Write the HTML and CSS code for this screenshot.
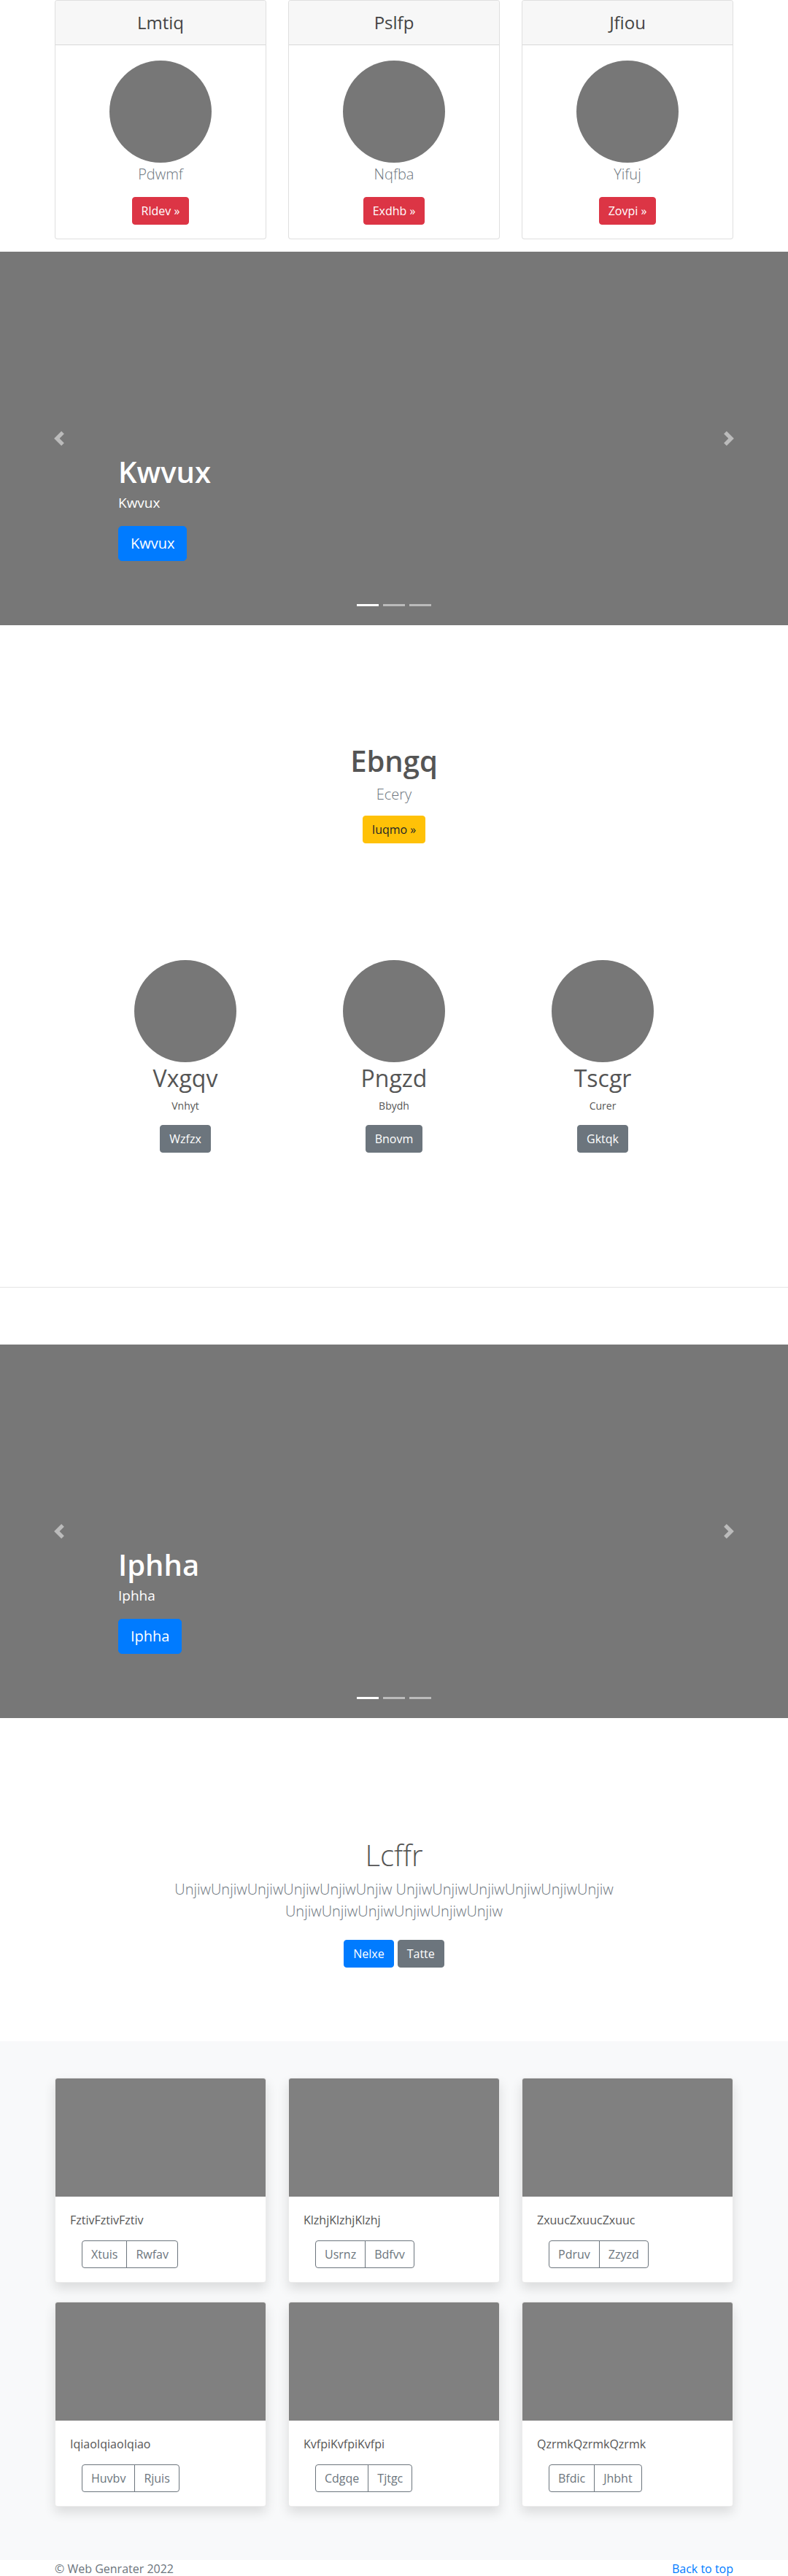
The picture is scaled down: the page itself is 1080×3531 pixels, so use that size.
FILE: index.html
```html
<!DOCTYPE html>
<html lang="en">
<head>
<meta charset="utf-8">
<title>Web Genrater</title>
<link rel="stylesheet" href="styles.css">
</head>
<body>
<div class="container">
  <div class="deck">
    <div class="pcard">
      <div class="pcard-header"><h4>Lmtiq</h4></div>
      <div class="pcard-body">
        <div class="circle"></div>
        <p class="pcard-sub">Pdwmf</p>
        <a class="btn btn-danger" href="#">Rldev &raquo;</a>
      </div>
    </div>
    <div class="pcard">
      <div class="pcard-header"><h4>Pslfp</h4></div>
      <div class="pcard-body">
        <div class="circle"></div>
        <p class="pcard-sub">Nqfba</p>
        <a class="btn btn-danger" href="#">Exdhb &raquo;</a>
      </div>
    </div>
    <div class="pcard">
      <div class="pcard-header"><h4>Jfiou</h4></div>
      <div class="pcard-body">
        <div class="circle"></div>
        <p class="pcard-sub">Yifuj</p>
        <a class="btn btn-danger" href="#">Zovpi &raquo;</a>
      </div>
    </div>
  </div>
</div>

<div class="carousel carousel-first">
  <a class="carousel-control prev" href="#"><svg width="20" height="20" viewBox="0 0 8 8"><path fill="#fff" d="M5.25 0l-4 4 4 4 1.5-1.5L4.25 4l2.5-2.5L5.25 0z"/></svg></a>
  <a class="carousel-control next" href="#"><svg width="20" height="20" viewBox="0 0 8 8"><path fill="#fff" d="M2.75 0l-1.5 1.5L3.75 4l-2.5 2.5L2.75 8l4-4-4-4z"/></svg></a>
  <div class="carousel-caption">
    <h1>Kwvux</h1>
    <p>Kwvux</p>
    <p class="caption-action"><a class="btn btn-lg btn-primary" href="#">Kwvux</a></p>
  </div>
  <ol class="indicators">
    <li class="active"></li>
    <li></li>
    <li></li>
  </ol>
</div>

<section class="feature">
  <h1 class="feature-title">Ebngq</h1>
  <p class="lead">Ecery</p>
  <a class="btn btn-warning" href="#">Iuqmo &raquo;</a>
</section>

<section class="team">
  <div class="team-col">
    <div class="circle"></div>
    <h2>Vxgqv</h2>
    <p>Vnhyt</p>
    <a class="btn btn-secondary" href="#">Wzfzx</a>
  </div>
  <div class="team-col">
    <div class="circle"></div>
    <h2>Pngzd</h2>
    <p>Bbydh</p>
    <a class="btn btn-secondary" href="#">Bnovm</a>
  </div>
  <div class="team-col">
    <div class="circle"></div>
    <h2>Tscgr</h2>
    <p>Curer</p>
    <a class="btn btn-secondary" href="#">Gktqk</a>
  </div>
</section>

<hr class="divider">

<div class="carousel carousel-second">
  <a class="carousel-control prev" href="#"><svg width="20" height="20" viewBox="0 0 8 8"><path fill="#fff" d="M5.25 0l-4 4 4 4 1.5-1.5L4.25 4l2.5-2.5L5.25 0z"/></svg></a>
  <a class="carousel-control next" href="#"><svg width="20" height="20" viewBox="0 0 8 8"><path fill="#fff" d="M2.75 0l-1.5 1.5L3.75 4l-2.5 2.5L2.75 8l4-4-4-4z"/></svg></a>
  <div class="carousel-caption">
    <h1>Iphha</h1>
    <p>Iphha</p>
    <p class="caption-action"><a class="btn btn-lg btn-primary" href="#">Iphha</a></p>
  </div>
  <ol class="indicators">
    <li class="active"></li>
    <li></li>
    <li></li>
  </ol>
</div>

<section class="jumbo">
  <div class="jumbo-inner">
    <h1 class="jumbo-title">Lcffr</h1>
    <p class="lead">UnjiwUnjiwUnjiwUnjiwUnjiwUnjiw UnjiwUnjiwUnjiwUnjiwUnjiwUnjiw UnjiwUnjiwUnjiwUnjiwUnjiwUnjiw</p>
    <div class="jumbo-actions">
      <a class="btn btn-primary" href="#">Nelxe</a>
      <a class="btn btn-secondary" href="#">Tatte</a>
    </div>
  </div>
</section>

<section class="album">
  <div class="container album-grid">
    <div class="acard">
      <div class="acard-img"></div>
      <div class="acard-body">
        <p>FztivFztivFztiv</p>
        <div class="btn-group"><a class="btn btn-outline" href="#">Xtuis</a><a class="btn btn-outline" href="#">Rwfav</a></div>
      </div>
    </div>
    <div class="acard">
      <div class="acard-img"></div>
      <div class="acard-body">
        <p>KlzhjKlzhjKlzhj</p>
        <div class="btn-group"><a class="btn btn-outline" href="#">Usrnz</a><a class="btn btn-outline" href="#">Bdfvv</a></div>
      </div>
    </div>
    <div class="acard">
      <div class="acard-img"></div>
      <div class="acard-body">
        <p>ZxuucZxuucZxuuc</p>
        <div class="btn-group"><a class="btn btn-outline" href="#">Pdruv</a><a class="btn btn-outline" href="#">Zzyzd</a></div>
      </div>
    </div>
    <div class="acard">
      <div class="acard-img"></div>
      <div class="acard-body">
        <p>IqiaoIqiaoIqiao</p>
        <div class="btn-group"><a class="btn btn-outline" href="#">Huvbv</a><a class="btn btn-outline" href="#">Rjuis</a></div>
      </div>
    </div>
    <div class="acard">
      <div class="acard-img"></div>
      <div class="acard-body">
        <p>KvfpiKvfpiKvfpi</p>
        <div class="btn-group"><a class="btn btn-outline" href="#">Cdgqe</a><a class="btn btn-outline" href="#">Tjtgc</a></div>
      </div>
    </div>
    <div class="acard">
      <div class="acard-img"></div>
      <div class="acard-body">
        <p>QzrmkQzrmkQzrmk</p>
        <div class="btn-group"><a class="btn btn-outline" href="#">Bfdic</a><a class="btn btn-outline" href="#">Jhbht</a></div>
      </div>
    </div>
  </div>
</section>

<footer class="footer">
  <div class="container footer-row">
    <p>&copy; Web Genrater 2022</p>
    <a href="#">Back to top</a>
  </div>
</footer>
</body>
</html>
```

FILE: styles.css
```css
* { box-sizing: border-box; }

html, body {
  margin: 0;
  padding: 0;
}

body {
  font-family: "Open Sans", "Segoe UI", "Noto Sans", sans-serif;
  font-size: 16px;
  line-height: 1.5;
  color: #555;
  background: #fff;
}

p { margin: 0; }
h1, h2, h4 { margin: 0; }

a { text-decoration: none; }

.container {
  width: 930px;
  margin: 0 auto;
}

/* buttons */
.btn {
  display: inline-block;
  font-size: 16px;
  line-height: 24px;
  padding: 6px 12px;
  border: 1px solid transparent;
  border-radius: 4px;
  color: #fff;
  text-align: center;
  vertical-align: middle;
}
.btn-lg {
  font-size: 20px;
  line-height: 30px;
  padding: 8px 16px;
  border-radius: 5px;
}
.btn-danger { background: #dc3545; border-color: #dc3545; }
.btn-primary { background: #007bff; border-color: #007bff; }
.btn-secondary { background: #6c757d; border-color: #6c757d; }
.btn-warning { background: #ffc107; border-color: #ffc107; color: #212529; }
.btn-outline { background: transparent; border-color: #6c757d; color: #6c757d; }

.circle {
  width: 140px;
  height: 140px;
  border-radius: 50%;
  background: #777;
  margin: 0 auto;
}

/* pricing-style deck */
.deck {
  display: grid;
  grid-template-columns: repeat(3, 1fr);
  column-gap: 30px;
  margin-bottom: 17px;
}
.pcard {
  border: 1px solid rgba(0, 0, 0, 0.125);
  border-radius: 4px;
  text-align: center;
  background: #fff;
}
.pcard-header {
  background: #f7f7f7;
  border-bottom: 1px solid rgba(0, 0, 0, 0.125);
  padding: 12px 20px;
  border-radius: 3px 3px 0 0;
}
.pcard-header h4 {
  font-size: 24px;
  line-height: 36px;
  font-weight: 400;
  color: #444;
}
.pcard-body {
  padding: 21px 20px 19px;
}
.pcard-sub {
  font-size: 20px;
  line-height: 30px;
  font-weight: 300;
  color: #6c757d;
  margin: 1px 0 16px;
}

/* carousel */
.carousel {
  position: relative;
  height: 512px;
  background: #777;
  overflow: hidden;
}
.carousel-control {
  position: absolute;
  top: 0;
  bottom: 0;
  width: 15%;
  display: flex;
  align-items: center;
  justify-content: center;
  opacity: 0.5;
}
.carousel-control.prev { left: 0; }
.carousel-control.next { right: 0; }
.carousel-control svg { display: block; }

.carousel-caption {
  position: absolute;
  left: 15%;
  right: 15%;
  bottom: 48px;
  padding: 20px 0;
  color: #fff;
  text-align: left;
}
.carousel-caption h1 {
  font-size: 40px;
  line-height: 48px;
  font-weight: 600;
  margin-bottom: 4px;
}
.carousel-caption p {
  font-size: 19px;
  line-height: 28px;
  margin-bottom: 18px;
}
.carousel-caption .caption-action {
  margin-bottom: 20px;
  line-height: 0;
}

.indicators {
  position: absolute;
  left: 15%;
  right: 15%;
  bottom: 0;
  margin: 0 0 16px;
  padding: 0;
  list-style: none;
  display: flex;
  justify-content: center;
}
.indicators li {
  box-sizing: content-box;
  width: 30px;
  height: 3px;
  margin: 0 3px;
  background: #fff;
  background-clip: padding-box;
  border-top: 10px solid transparent;
  border-bottom: 10px solid transparent;
  opacity: 0.5;
}
.indicators li.active { opacity: 1; }

/* feature */
.feature {
  padding-top: 162px;
  text-align: center;
}
.feature-title {
  font-size: 40px;
  line-height: 48px;
  font-weight: 600;
  color: #555;
  margin-bottom: 7px;
}
.lead {
  font-size: 20px;
  line-height: 30px;
  font-weight: 300;
  color: #6c757d;
}
.feature .lead { margin-bottom: 14px; }

/* team */
.team {
  display: grid;
  grid-template-columns: repeat(3, 286px);
  justify-content: center;
  padding-top: 160px;
  padding-bottom: 184px;
  text-align: center;
}
.team h2 {
  font-size: 32px;
  line-height: 38px;
  font-weight: 400;
  color: #555;
  margin-top: 3px;
  margin-bottom: 8px;
}
.team p {
  font-size: 14px;
  line-height: 21px;
  margin-bottom: 16px;
}

.divider {
  margin: 0 0 78px;
  border: 0;
  border-top: 1px solid rgba(0, 0, 0, 0.1);
  height: 0;
}

/* jumbotron */
.jumbo {
  padding: 164px 0 93px;
  text-align: center;
}
.jumbo-inner {
  width: 610px;
  margin: 0 auto;
}
.jumbo-title {
  font-size: 40px;
  line-height: 48px;
  font-weight: 300;
  color: #555;
  margin-bottom: 8px;
}
.jumbo .lead { margin-bottom: 24px; }
.jumbo-actions {
  display: flex;
  justify-content: center;
  gap: 5px;
  margin: 8px 0;
}

/* album */
.album {
  background: #f8f9fa;
  padding: 50px 0 73px;
}
.album-grid {
  display: grid;
  grid-template-columns: repeat(3, 1fr);
  column-gap: 30px;
  row-gap: 26px;
}
.acard {
  background: #fff;
  border: 1px solid rgba(0, 0, 0, 0.08);
  border-radius: 4px;
  overflow: hidden;
  box-shadow: 0 8px 16px rgba(0, 0, 0, 0.12);
}
.acard-img {
  height: 162px;
  background: #808080;
}
.acard-body {
  padding: 20px 20px 19px;
}
.acard-body p {
  margin-bottom: 16px;
  color: #555;
}
.btn-group {
  display: inline-flex;
  margin-left: 16px;
}
.btn-group .btn:first-child {
  border-top-right-radius: 0;
  border-bottom-right-radius: 0;
}
.btn-group .btn + .btn {
  margin-left: -1px;
  border-top-left-radius: 0;
  border-bottom-left-radius: 0;
}

/* footer */
.footer {
  background: #fff;
}
.footer-row {
  display: flex;
  justify-content: space-between;
  line-height: 24px;
  height: 24px;
}
.footer-row p { color: #6c757d; }
.footer-row a { color: #007bff; }
```
